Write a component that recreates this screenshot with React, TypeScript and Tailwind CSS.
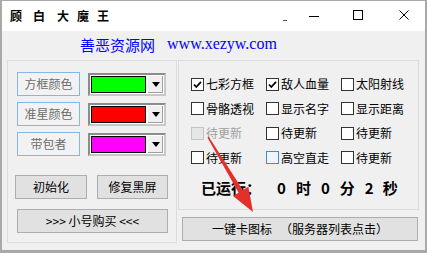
import React from 'react';

const CJK = "font-['Noto_Sans_CJK_SC',sans-serif]";

const options: { label: string; state?: 'checked' | 'disabled' | 'hover' }[] = [
  { label: '七彩方框', state: 'checked' },
  { label: '敌人血量', state: 'checked' },
  { label: '太阳射线' },
  { label: '骨骼透视' },
  { label: '显示名字' },
  { label: '显示距离' },
  { label: '待更新', state: 'disabled' },
  { label: '待更新' },
  { label: '待更新' },
  { label: '待更新' },
  { label: '高空直走', state: 'hover' },
  { label: '待更新' },
];

const colours = [
  { label: '方框颜色', color: 'bg-[#00ff00]' },
  { label: '准星颜色', color: 'bg-[#ff0000]' },
  { label: '带包者', color: 'bg-[#ff00ff]' },
];

function CheckBox({ state }: { state?: 'checked' | 'disabled' | 'hover' }) {
  const box =
    state === 'disabled'
      ? 'border-[#c4c4c4] bg-[#e6e6e6]'
      : state === 'hover'
        ? 'border-[#3c8de0] bg-[#eef5fd]'
        : 'border-[#333333] bg-white';
  return (
    <span className={`flex h-[13px] w-[13px] shrink-0 items-center justify-center border ${box}`}>
      {state === 'checked' && (
        <svg width="11" height="11" viewBox="0 0 11 11">
          <path d="M2 5.5 L4.3 8 L9 2.8" fill="none" stroke="#000" strokeWidth="1.8" />
        </svg>
      )}
    </span>
  );
}

function ColourPicker({ color }: { color: string }) {
  return (
    <div className="ml-[8px] flex h-[23px] w-[78px] border-2 border-[#8c8c8c] border-b-[#c8c8c8] border-r-[#c8c8c8] bg-white p-[1px]">
      <div className={`flex-1 border border-black ${color}`} />
      <div className="ml-[1px] flex w-[16px] items-center justify-center border-l border-white bg-[#f0f0f0] shadow-[inset_-1px_-1px_0_#a0a0a0]">
        <svg width="8" height="5" viewBox="0 0 8 5">
          <path d="M0 0 H8 L4 5 Z" fill="#000" />
        </svg>
      </div>
    </div>
  );
}

export default function App() {
  return (
    <div
      className={`relative flex h-[253px] w-[427px] flex-col border-t border-b-[3px] border-l-2 border-r-2 border-[#a9a9a9] bg-[#f0f0f0] ${CJK} text-[12px] text-black`}
    >
      {/* Title bar */}
      <div className="flex h-[30px] items-center bg-white">
        <div className="flex w-[281px] items-center pl-[8px] text-[12px] font-bold leading-none">
          <span>顾</span>
          <span className="ml-[11px]">白</span>
          <span className="ml-[12px]">大</span>
          <span className="ml-[8px]">魔</span>
          <span className="ml-[8px]">王</span>
        </div>
        <span className="mt-[8px] h-[1px] w-[4px] bg-[#555]" />
        <span className="ml-[22px] h-[1px] w-[10px] bg-black" />
        <span className="ml-[34px] -mt-[2px] h-[10px] w-[10px] border border-black" />
        <svg className="ml-[36px] -mt-[2px]" width="10" height="10" viewBox="0 0 10 10">
          <path d="M0.5 0.5 L9.5 9.5 M9.5 0.5 L0.5 9.5" stroke="#000" strokeWidth="1" />
        </svg>
      </div>

      {/* Body */}
      <div className="flex flex-1 flex-col">
        <div className="flex h-[26px] items-center pl-[78px] text-[#0000ff]">
          <span className="text-[15px] leading-none">善恶资源网</span>
          <span className="ml-[12px] font-['Liberation_Serif',serif] text-[16px] leading-none">www.xezyw.com</span>
        </div>

        <div className="mt-[3px] flex items-start">
          {/* Left group */}
          <div className="ml-[5px] flex h-[183px] w-[170px] flex-col border border-[#dcdcdc] pl-[9px] pt-[11px]">
            <div className="flex flex-col gap-[6px]">
              {colours.map((c) => (
                <div key={c.label} className="flex h-[24px] items-center">
                  <div className="flex h-[24px] w-[63px] items-center justify-center border border-[#86b6e6] bg-[#f2f2f2] text-[#6d6d6d]">
                    {c.label}
                  </div>
                  <ColourPicker color={c.color} />
                </div>
              ))}
            </div>
            <div className="-ml-[2px] mt-[19px] flex">
              <button className="h-[24px] w-[72px] border border-[#adadad] bg-[#e1e1e1]">初始化</button>
              <button className="ml-[10px] h-[24px] w-[71px] border border-[#adadad] bg-[#e1e1e1]">修复黑屏</button>
            </div>
            <button className="mt-[10px] h-[24px] w-[151px] whitespace-pre border border-[#adadad] bg-[#e1e1e1]">
              {'>>> 小号购买 <<<'}
            </button>
          </div>

          {/* Right column */}
          <div className="ml-[1px] flex flex-col">
            <div className="flex h-[150px] w-[241px] flex-col border border-[#dcdcdc]">
              <div className="grid grid-cols-[75px_75px_75px] pl-[12px] pt-[11px]">
                {options.map((o, i) => (
                  <div key={i} className="flex h-[24.5px] items-center">
                    <CheckBox state={o.state} />
                    <span className={`ml-[2px] leading-none ${o.state === 'disabled' ? 'text-[#a0a0a0]' : ''}`}>
                      {o.label}
                    </span>
                  </div>
                ))}
              </div>
              <div className="mt-[7px] flex h-[20px] items-center pl-[22px] text-[15px] font-bold leading-none">
                <span>已运行：</span>
                <span className="ml-[16px]">0</span>
                <span className="ml-[10px]">时</span>
                <span className="ml-[10px]">0</span>
                <span className="ml-[10px]">分</span>
                <span className="ml-[10px]">2</span>
                <span className="ml-[9px]">秒</span>
              </div>
            </div>
            <button className="ml-[4px] mt-[7px] flex h-[24px] w-[236px] items-center justify-center border border-[#adadad] bg-[#e1e1e1]">
              <span>一键卡图标</span>
              <span className="ml-[8px]">（服务器列表点击）</span>
            </button>
          </div>
        </div>
      </div>

      {/* Red arrow overlay */}
      <svg
        className="pointer-events-none absolute -left-[2px] -top-[1px]"
        width="427"
        height="253"
        viewBox="0 0 427 253"
      >
        <polygon
          points="208.6,136.6 242.8,190.1 248.4,186.8 253,212 233,196 238.6,192.7 207.4,137.4"
          fill="#e5302a"
        />
      </svg>
    </div>
  );
}
